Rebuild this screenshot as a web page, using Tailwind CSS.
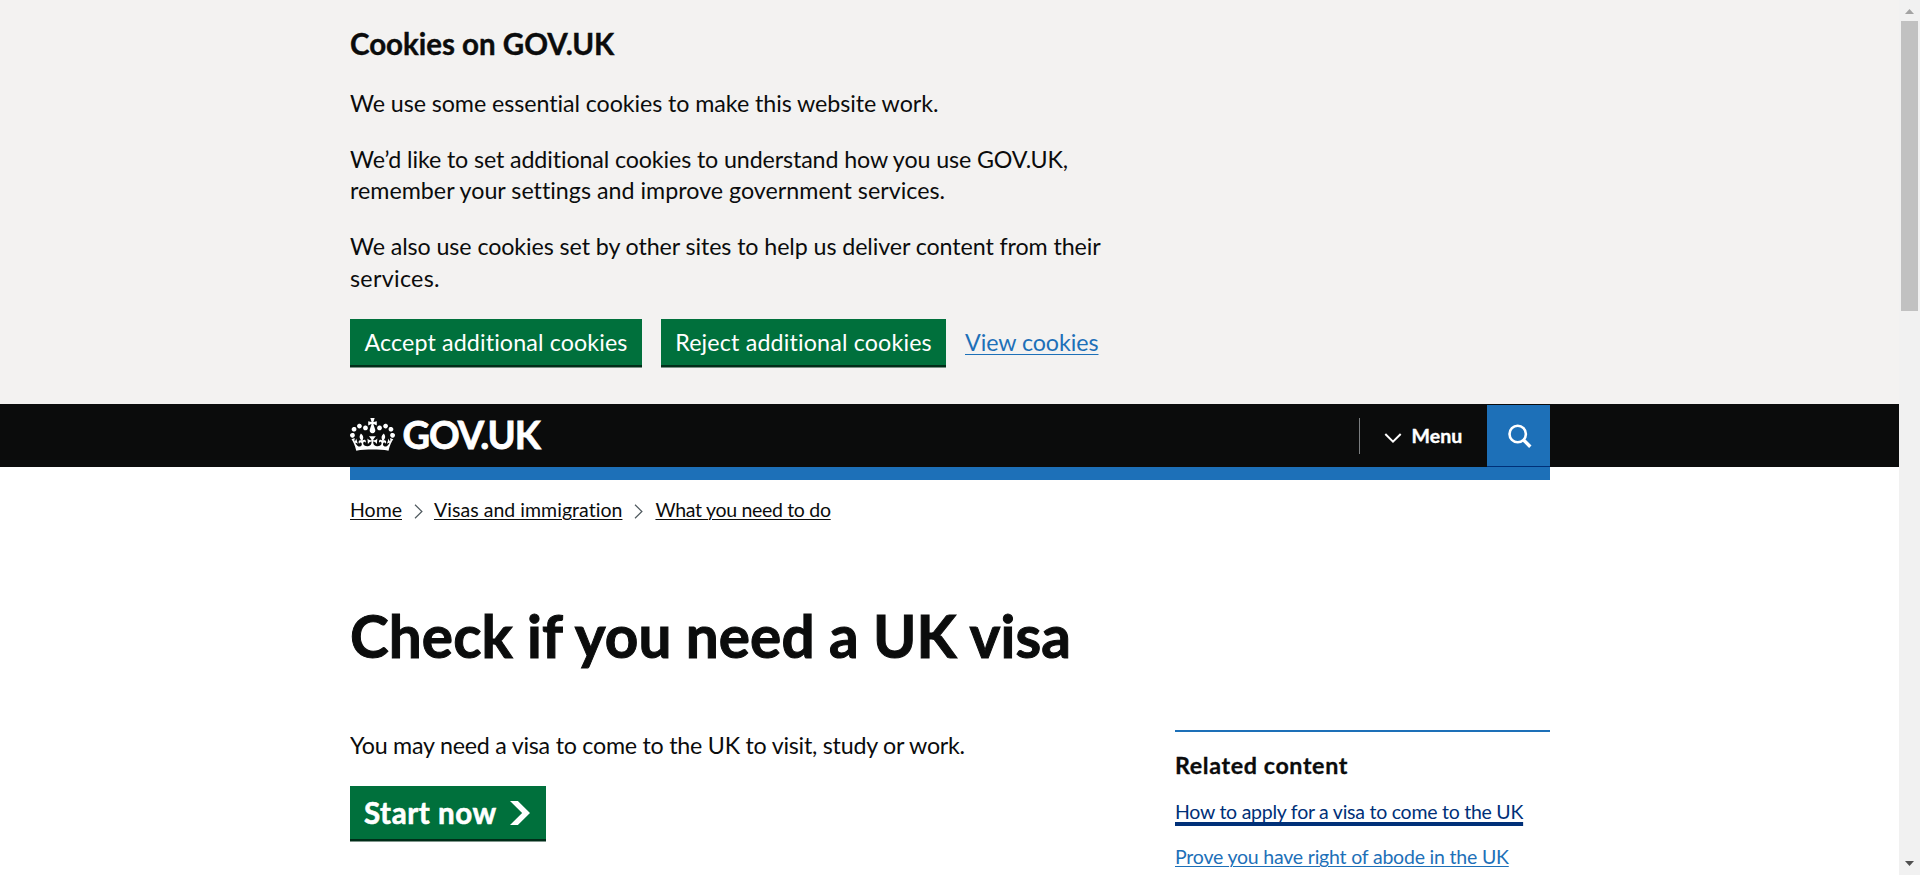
<!DOCTYPE html>
<html lang="en">
<head>
<meta charset="utf-8">
<title>Check if you need a UK visa - GOV.UK</title>
<script src="https://cdn.jsdelivr.net/npm/@tailwindcss/browser@4"></script>
</head>
<body class="flex h-[875px] overflow-hidden bg-white font-['Lato','Noto_Sans',sans-serif] text-[#0b0c0c] text-[23.25px] leading-[31.25px] whitespace-nowrap">
<div class="w-[1899px] shrink-0">
  <section class="h-[404px] bg-[#f3f2f1] pt-[25px] pl-[350px]">
    <h2 class="text-[29.5px] leading-[37.5px] font-bold tracking-[-0.02px] [-webkit-text-stroke:0.4px]">Cookies on GOV.UK</h2>
    <p class="mt-[25px] tracking-[-0.07px]">We use some essential cookies to make this website work.</p>
    <p class="mt-[25px]"><span class="tracking-[-0.12px]">We’d like to set additional cookies to understand how you use GOV.UK,</span><br><span class="tracking-[0.01px]">remember your settings and improve government services.</span></p>
    <p class="mt-[25px]"><span class="tracking-[-0.093px]">We also use cookies set by other sites to help us deliver content from their</span><br><span class="tracking-[0.3px]">services.</span></p>
    <div class="mt-[25px] flex items-center">
      <button class="h-[46px] w-[292px] bg-[#00703c] pt-px text-white tracking-[0.128px] shadow-[0_2.5px_0_#002d18]">Accept additional cookies</button>
      <button class="ml-[19px] h-[46px] w-[285px] bg-[#00703c] pt-px text-white tracking-[0.161px] shadow-[0_2.5px_0_#002d18]">Reject additional cookies</button>
      <a class="ml-[19px] pt-px text-[#1d70b8] tracking-[-0.06px] underline decoration-1 underline-offset-[3px]">View cookies</a>
    </div>
  </section>
  <header class="h-[63px] bg-[#0b0c0c] pl-[350px]">
    <div class="flex h-full w-[1200px] items-start text-white">
      <svg class="mt-[14px] h-[33px] w-[45px]" viewBox="0 0 132 97" fill="currentColor"><path d="M25 30.2c3.5 1.5 7.7-.2 9.1-3.7 1.5-3.6-.2-7.8-3.9-9.2-3.6-1.4-7.6.3-9.1 3.9-1.4 3.5.3 7.5 3.9 9zM9 39.5c3.6 1.5 7.8-.2 9.2-3.7 1.5-3.6-.2-7.8-3.9-9.1-3.6-1.5-7.6.2-9.1 3.8-1.4 3.5.3 7.5 3.8 9zM4.4 57.2c3.5 1.5 7.7-.2 9.1-3.8 1.5-3.6-.2-7.7-3.9-9.1-3.5-1.5-7.6.3-9.1 3.8-1.4 3.5.3 7.6 3.9 9.1zm38.3-21.4c3.5 1.5 7.7-.2 9.1-3.8 1.5-3.6-.2-7.7-3.9-9.1-3.6-1.5-7.6.3-9.1 3.8-1.3 3.6.4 7.7 3.9 9.1zm64.4-5.6c-3.6 1.5-7.8-.2-9.1-3.7-1.5-3.6.2-7.8 3.8-9.2 3.6-1.4 7.7.3 9.2 3.9 1.3 3.5-.4 7.5-3.9 9zm15.9 9.3c-3.6 1.5-7.7-.2-9.1-3.7-1.5-3.6.2-7.8 3.7-9.1 3.6-1.5 7.7.2 9.2 3.8 1.5 3.5-.3 7.5-3.8 9zm4.7 17.7c-3.6 1.5-7.8-.2-9.2-3.8-1.5-3.6.2-7.7 3.9-9.1 3.6-1.5 7.7.3 9.2 3.8 1.3 3.5-.4 7.6-3.9 9.1zM89.3 35.8c-3.6 1.5-7.8-.2-9.2-3.8-1.4-3.6.2-7.7 3.9-9.1 3.6-1.5 7.7.3 9.2 3.8 1.4 3.6-.3 7.7-3.9 9.1zM69.7 17.7l8.9 4.7V9.3l-8.9 2.8c-.2-.3-.5-.6-.9-.9L72.4 0H59.6l3.5 11.2c-.3.3-.6.5-.9.9l-8.8-2.8v13.1l8.8-4.7c.3.3.6.7.9.9l-5 15.4v.1c-.2.8-.4 1.6-.4 2.4 0 4.1 3.1 7.5 7 8.1h.2c.3 0 .7.1 1 .1.4 0 .7 0 1-.1h.2c4-.6 7.1-4.1 7.1-8.1 0-.8-.1-1.7-.4-2.4V34l-5.1-15.4c.4-.2.7-.6 1-.9zM66 92.8c16.9 0 32.8 1.1 47.1 3.2 4-16.9 8.9-26.7 14-33.5l-9.6-3.4c1 4.9 1.1 7.2 0 10.2-1.5-1.4-3-4.3-4.2-8.7L108.6 76c2.8-2 5-3.2 7.5-3.3-4.4 9.4-10 11.9-13.6 11.2-4.3-.8-6.3-4.6-5.6-7.9 1-4.7 5.7-5.9 8-.5 4.3-8.7-3-11.4-7.6-8.8 7.1-7.2 7.9-13.5 2.1-21.1-8 6.1-8.1 12.3-4.5 20.8-4.7-5.4-12.1-2.5-9.5 6.2 3.4-5.2 7.9-2 7.2 3.1-.6 4.3-6.4 7.8-13.5 7.2-10.3-.9-10.9-8-11.2-13.8 2.5-.5 7.1 1.8 11 7.3L80.2 60c-4.1 4.4-8 5.3-12.3 5.4 1.4-4.4 8-11.6 8-11.6H55.5s6.4 7.2 7.9 11.6c-4.2-.1-8-1-12.3-5.4l1.4 16.4c3.9-5.5 8.5-7.7 10.9-7.3-.3 5.8-.9 12.8-11.1 13.8-7.2.6-12.9-2.9-13.5-7.2-.7-5 3.8-8.3 7.1-3.1 2.7-8.7-4.6-11.6-9.4-6.2 3.7-8.5 3.6-14.7-4.6-20.8-5.8 7.6-5 13.9 2.2 21.1-4.7-2.6-11.9.1-7.7 8.8 2.3-5.5 7.1-4.2 8.1.5.7 3.3-1.3 7.1-5.7 7.9-3.5.7-9-1.8-13.5-11.2 2.5.1 4.7 1.3 7.5 3.3l-4.7-15.4c-1.2 4.4-2.7 7.2-4.3 8.7-1.1-3-.9-5.3 0-10.2l-9.5 3.4c5 6.9 9.9 16.7 14 33.5 14.8-2.1 30.8-3.2 47.7-3.2z"/></svg>
      <span class="ml-[7.5px] mt-[10px] text-[38px] leading-[40px] font-bold tracking-[-1.1px] [-webkit-text-stroke:0.8px]">GOV.UK</span>
      <div class="ml-auto mt-[14px] h-9 w-px bg-[#7b7e80]"></div>
      <div class="mt-px flex h-[62px] w-[127px] items-center pl-[24px]">
        <svg class="mt-[3px] h-[10px] w-[18px]" viewBox="0 0 18 10" fill="none" stroke="currentColor" stroke-width="2"><path d="M1.3 1l7.7 7.6L16.7 1"/></svg>
        <span class="ml-[9.5px] text-[19.5px] font-bold tracking-[0.1px] [-webkit-text-stroke:0.4px]">Menu</span>
      </div>
      <div class="mt-px flex h-[62px] w-[63px] items-center justify-center border-b border-[#003078] bg-[#1d70b8]">
        <svg class="h-[26px] w-[26px]" viewBox="0 0 26 26" fill="none" stroke="currentColor"><circle cx="11.7" cy="11" r="8.2" stroke-width="2.6"/><path d="M17.3 16.7l7 7" stroke-width="3.4"/></svg>
      </div>
    </div>
  </header>
  <main class="ml-[350px] w-[1200px]">
    <div class="h-[13px] bg-[#1d70b8]"></div>
    <nav class="mt-[17px] flex h-[26px] items-center text-[19.5px] leading-[26px]">
      <a class="underline decoration-1 underline-offset-[2px]">Home</a>
      <svg class="ml-[12px] mr-[11px] mt-[2px] h-[15px] w-[9px]" viewBox="0 0 9 15" fill="none" stroke="#505a5f" stroke-width="1.2"><path d="M1 .8l6.9 6.7L1 14.2"/></svg>
      <a class="underline decoration-1 underline-offset-[2px] tracking-[0.04px]">Visas and immigration</a>
      <svg class="ml-[12px] mr-[12px] mt-[2px] h-[15px] w-[9px]" viewBox="0 0 9 15" fill="none" stroke="#505a5f" stroke-width="1.2"><path d="M1 .8l6.9 6.7L1 14.2"/></svg>
      <a class="underline decoration-1 underline-offset-[2px] tracking-[-0.31px]">What you need to do</a>
    </nav>
    <h1 class="mt-[81px] text-[58.5px] leading-[62px] font-bold tracking-[0.07px] [-webkit-text-stroke:1px]">Check if you need a UK visa</h1>
    <div class="mt-[64px] flex h-[144px] justify-between overflow-hidden">
      <div>
        <p class="tracking-[-0.24px]">You may need a visa to come to the UK to visit, study or work.</p>
        <a class="mt-[24.75px] flex h-[53px] w-[196px] items-center bg-[#00703c] pl-[14px] text-[29.5px] font-bold tracking-[0.56px] text-white shadow-[0_2.5px_0_#002d18] [-webkit-text-stroke:0.6px]">Start now<svg class="ml-auto mr-[16px] h-[24px] w-[20px]" viewBox="0 0 33 40" preserveAspectRatio="none" fill="currentColor"><path d="M0 0h13l20 20-20 20H0l20-20z"/></svg></a>
      </div>
      <aside class="w-[375px] border-t-2 border-[#1d70b8] pt-[18px]">
        <h2 class="font-bold tracking-[0.62px] [-webkit-text-stroke:0.3px]">Related content</h2>
        <ul class="mt-[18px] space-y-[20px] text-[19.5px] leading-[25px]">
          <li><a class="text-[#003078] tracking-[-0.25px] underline decoration-4 underline-offset-[3px] [text-decoration-skip-ink:none]">How to apply for a visa to come to the UK</a></li>
          <li><a class="text-[#1d70b8] tracking-[-0.2px] underline decoration-1 underline-offset-[2px]">Prove you have right of abode in the UK</a></li>
        </ul>
      </aside>
    </div>
  </main>
</div>
<div class="flex w-[21px] shrink-0 flex-col items-center bg-[#f1f1f1]">
  <svg class="mt-[9px] h-[5px] w-[9px]" viewBox="0 0 9 5" fill="#a3a3a3"><path d="M4.5 0L9 5H0z"/></svg>
  <div class="mt-[7px] h-[290px] w-[17px] bg-[#c1c1c1]"></div>
  <svg class="mb-[9px] mt-auto h-[5px] w-[9px]" viewBox="0 0 9 5" fill="#505050"><path d="M4.5 5L9 0H0z"/></svg>
</div>
</body>
</html>
